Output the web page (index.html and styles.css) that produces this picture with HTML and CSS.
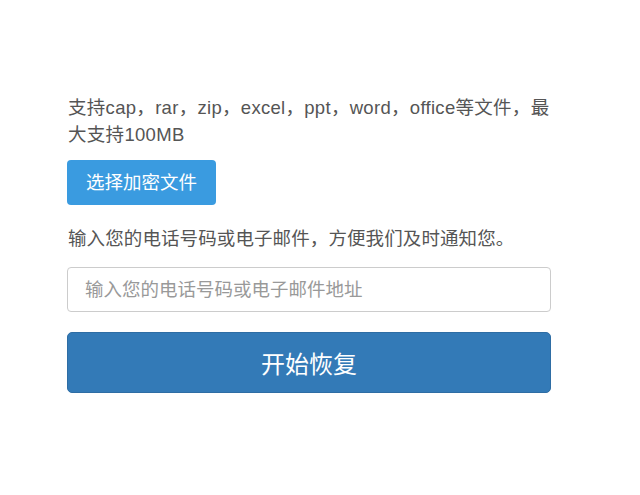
FILE: index.html
```html
<!DOCTYPE html>
<html lang="zh-CN">
<head>
<meta charset="utf-8">
<title>开始恢复</title>
<link rel="stylesheet" href="styles.css">
</head>
<body>
<div class="panel">
  <p class="hint hint-formats">支持cap，rar，zip，excel，ppt，word，office等文件，最大支持100MB</p>
  <button class="btn-file" type="button">选择加密文件</button>
  <p class="hint hint-contact">输入您的电话号码或电子邮件，方便我们及时通知您。</p>
  <input class="contact" type="text" placeholder="输入您的电话号码或电子邮件地址">
  <button class="btn-start" type="button">开始恢复</button>
</div>
</body>
</html>
```
FILE: styles.css
```css
html, body {
  margin: 0;
  padding: 0;
  background: #ffffff;
}
body {
  font-family: "Liberation Sans", "Noto Sans CJK SC", sans-serif;
  color: #555555;
}
.panel {
  width: 484px;
  margin-left: 67px;
  padding-top: 94px;
  display: flex;
  flex-direction: column;
  align-items: flex-start;
}
.hint {
  margin: 0;
  font-size: 18.5px;
  line-height: 27px;
  padding-left: 1px;
}
.hint-formats {
  letter-spacing: 0.3px;
}
.btn-file {
  margin-top: 12px;
  height: 45px;
  padding: 0 19px;
  border: 0;
  border-radius: 4px;
  background: #3a9be0;
  color: #ffffff;
  font-family: inherit;
  font-size: 18.5px;
  line-height: 45px;
}
.hint-contact {
  margin-top: 20px;
  letter-spacing: 0.1px;
}
.contact {
  box-sizing: border-box;
  margin-top: 15px;
  width: 484px;
  height: 45px;
  padding: 0 17px;
  border: 1px solid #cccccc;
  border-radius: 4px;
  font-family: inherit;
  font-size: 18.5px;
  color: #555555;
  outline: none;
}
.contact::placeholder {
  color: #999999;
}
.btn-start {
  box-sizing: border-box;
  margin-top: 20px;
  width: 484px;
  height: 61px;
  border: 1px solid #2e6da4;
  border-radius: 5px;
  background: #337ab7;
  color: #ffffff;
  font-family: inherit;
  font-size: 24px;
}
```
